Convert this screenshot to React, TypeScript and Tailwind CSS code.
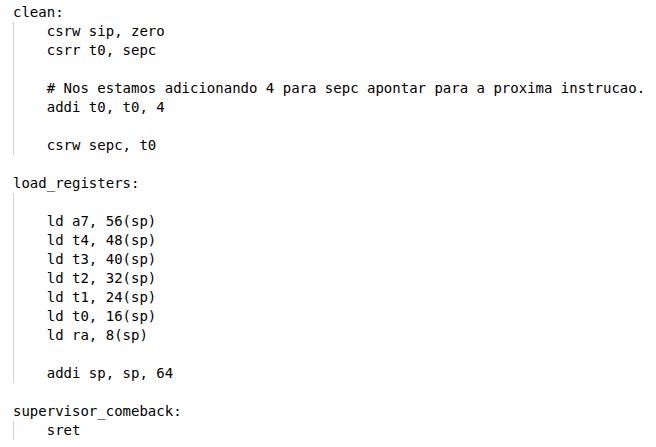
const blocks: { label: string; lines: string[] }[] = [
  {
    label: "clean:",
    lines: [
      "csrw sip, zero",
      "csrr t0, sepc",
      "",
      "# Nos estamos adicionando 4 para sepc apontar para a proxima instrucao.",
      "addi t0, t0, 4",
      "",
      "csrw sepc, t0",
    ],
  },
  {
    label: "load_registers:",
    lines: [
      "",
      "ld a7, 56(sp)",
      "ld t4, 48(sp)",
      "ld t3, 40(sp)",
      "ld t2, 32(sp)",
      "ld t1, 24(sp)",
      "ld t0, 16(sp)",
      "ld ra, 8(sp)",
      "",
      "addi sp, sp, 64",
    ],
  },
  {
    label: "supervisor_comeback:",
    lines: ["sret"],
  },
];

const App = () => {
  return (
    <div className="min-h-[447px] w-[656px] bg-white pl-[13px] pt-[3px] text-[14px] leading-[19px] text-black font-['DejaVu_Sans_Mono',monospace] whitespace-pre">
      {blocks.map((block, idx) => (
        <div key={block.label}>
          <div className="h-[19px]">{block.label}</div>
          <div className="border-l border-[#d3d3d3] pl-[calc(4ch-1px)]">
            {block.lines.map((line, i) => (
              <div key={i} className="h-[19px]">
                {line}
              </div>
            ))}
          </div>
          {idx < blocks.length - 1 && <div className="h-[19px]" />}
        </div>
      ))}
    </div>
  );
};

export default App;
